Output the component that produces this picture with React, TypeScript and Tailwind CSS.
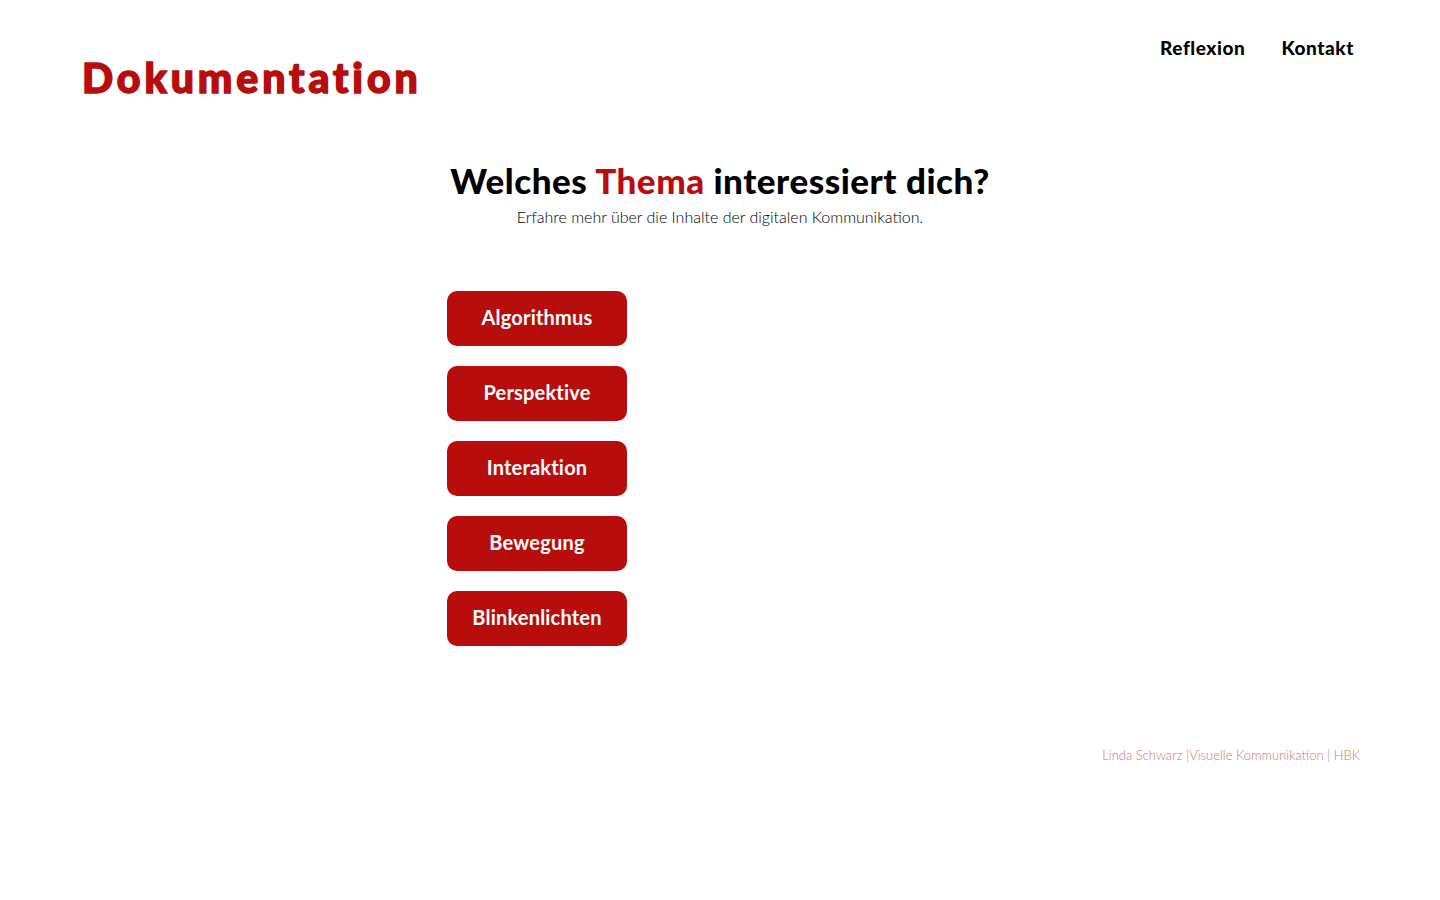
const topics = ["Algorithmus", "Perspektive", "Interaktion", "Bewegung", "Blinkenlichten"];

export default function App() {
  return (
    <div className="min-h-screen w-full bg-white font-['Lato',sans-serif] text-black">
      <header className="flex items-start justify-between pl-[82px] pr-[86px] pt-[36px]">
        <h1 className="mt-[18px] text-[41px] font-black leading-[48px] tracking-[0.095em] text-[#b80d0d] [-webkit-text-stroke:1.5px_#b80d0d]">
          Dokumentation
        </h1>
        <nav className="flex gap-[36px] text-[19px] font-black leading-[24px] tracking-[0.03em]">
          <a href="#">Reflexion</a>
          <a href="#">Kontakt</a>
        </nav>
      </header>

      <main className="mx-auto mt-[59px] flex w-[546px] flex-col">
        <h2 className="text-center text-[35px] font-black leading-[38px] tracking-[0.015em]">
          Welches <span className="text-[#b80d0d]">Thema</span> interessiert dich?
        </h2>
        <p className="mt-[6px] text-center text-[16px] font-light leading-[24px] text-black">
          Erfahre mehr über die Inhalte der digitalen Kommunikation.
        </p>
        <div className="mt-[62px] flex flex-col gap-[20px]">
          {topics.map((t) => (
            <button
              key={t}
              className="flex h-[55px] w-[180px] items-center justify-center rounded-[10px] bg-[#b80d0d] pb-[3px] text-[20px] font-bold tracking-[0.01em] text-white"
            >
              {t}
            </button>
          ))}
        </div>
      </main>

      <footer className="mt-[100px] flex justify-end pr-[80px] text-[13px] font-light text-[#dc7070]">
        Linda Schwarz |Visuelle Kommunikation | HBK
      </footer>
    </div>
  );
}
